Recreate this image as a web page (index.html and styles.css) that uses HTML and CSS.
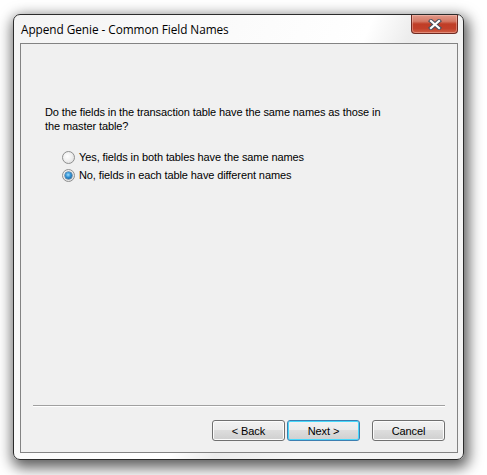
FILE: index.html
```html
<!DOCTYPE html>
<html>
<head>
<meta charset="utf-8">
<link rel="stylesheet" href="styles.css">
</head>
<body>
<div class="window">
  <div class="titlebar">
    <span class="title">Append Genie - Common Field Names</span>
    <button class="close" aria-label="Close">
      <svg width="14" height="11" viewBox="0 0 14 11">
        <path d="M3 2 L11 9 M11 2 L3 9" stroke="#4a4f5c" stroke-width="4.2" stroke-linecap="square" fill="none"/>
        <path d="M3 2 L11 9 M11 2 L3 9" stroke="#ffffff" stroke-width="2.2" stroke-linecap="square" fill="none"/>
      </svg>
    </button>
  </div>
  <div class="client">
    <div class="content">
      <p class="question">Do the fields in the transaction table have the same names as those in the master table?</p>
      <div class="options">
        <label class="option"><span class="radio"></span>Yes, fields in both tables have the same names</label>
        <label class="option"><span class="radio checked"></span>No, fields in each table have different names</label>
      </div>
    </div>
    <div class="separator"></div>
    <div class="buttons">
      <button class="btn">&lt; Back</button>
      <button class="btn default">Next &gt;</button>
      <button class="btn cancel">Cancel</button>
    </div>
  </div>
</div>
</body>
</html>
```
FILE: styles.css
```css
html, body {
  margin: 0;
  padding: 0;
  background: #ffffff;
}
body {
  width: 487px;
  height: 475px;
  overflow: hidden;
}
.window {
  position: relative;
  margin: 14px 0 0 13px;
  width: 451px;
  height: 446px;
  box-sizing: border-box;
  border: 1px solid #2c2c2c;
  border-radius: 7px;
  background: linear-gradient(115deg, #f4f4f4 0%, #fbfbfb 35%, #ffffff 55%, #ececec 62%, #f6f6f6 75%, #f2f2f2 100%);
  box-shadow: 2px 5px 14px 3px rgba(0, 0, 0, 0.62);
  padding: 0 5px 6px 6px;
  display: flex;
  flex-direction: column;
}
.titlebar {
  height: 28px;
  display: flex;
  align-items: center;
  padding-left: 1px;
}
.title {
  font-family: "Open Sans", "Noto Sans", sans-serif;
  font-size: 11.8px;
  color: #000000;
  margin-top: 0;
  letter-spacing: -0.05px;
}
.close {
  position: absolute;
  top: 0;
  right: 5px;
  width: 47px;
  height: 19px;
  padding: 0;
  border: 1px solid #6e2a22;
  border-top: none;
  border-radius: 0 0 4px 4px;
  background: linear-gradient(to bottom, #e2998a 0%, #d47864 35%, #bf3d26 50%, #c2402a 75%, #d06046 100%);
  box-shadow: inset 0 0 0 1px rgba(255, 210, 200, 0.4);
  display: flex;
  align-items: center;
  justify-content: center;
}
.client {
  flex: 1;
  border: 1px solid #838383;
  background: #f0f0f0;
  display: flex;
  flex-direction: column;
  padding: 0 11px 11px 11px;
  font-family: "Liberation Sans", Arial, sans-serif;
  font-size: 11px;
  letter-spacing: -0.1px;
  color: #000000;
}
.content {
  flex: 1;
  padding: 61px 0 0 13px;
}
.question {
  margin: 0;
  width: 350px;
  line-height: 14px;
}
.options {
  margin: 15px 0 0 17px;
  display: flex;
  flex-direction: column;
}
.option {
  height: 18px;
  display: flex;
  align-items: center;
  gap: 4px;
}
.radio {
  width: 11px;
  height: 11px;
  border-radius: 50%;
  border: 1px solid #8e8f8f;
  background: radial-gradient(circle at 40% 40%, #ffffff 0%, #f0f0f0 45%, #d6d6d6 100%);
  box-sizing: content-box;
  position: relative;
}
.radio.checked::after {
  content: "";
  position: absolute;
  left: 2px;
  top: 2px;
  width: 7px;
  height: 7px;
  border-radius: 50%;
  background: radial-gradient(circle at 45% 40%, #9fe0ff 0%, #2f8fd3 45%, #0b4a7e 100%);
  box-shadow: 0 0 0 0.5px #24507a;
}
.separator {
  height: 1px;
  background: #a0a0a0;
  border-bottom: 1px solid #ffffff;
  margin: 0 1px 0 1px;
}
.buttons {
  display: flex;
  justify-content: flex-end;
  margin-top: 13px;
  margin-right: 1px;
}
.btn {
  width: 73px;
  height: 21px;
  box-sizing: border-box;
  padding: 0;
  border: 1px solid #707070;
  border-radius: 3px;
  background: linear-gradient(to bottom, #f2f2f2 0%, #ebebeb 49%, #dddddd 50%, #cfcfcf 100%);
  box-shadow: inset 0 0 0 1px #fcfcfc;
  font-family: "Liberation Sans", Arial, sans-serif;
  font-size: 11px;
  letter-spacing: -0.1px;
  color: #000000;
}
.btn + .btn {
  margin-left: 2px;
}
.btn.default {
  border-color: #3c7fb1;
  box-shadow: inset 0 0 0 1px #48d8fb;
}
.btn.cancel {
  margin-left: 12px;
}
```
